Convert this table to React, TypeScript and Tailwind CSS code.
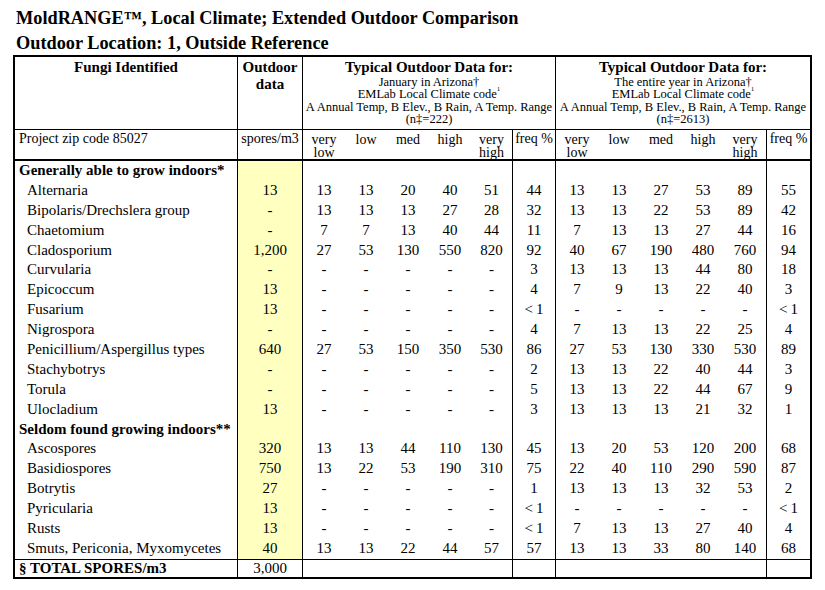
import React from "react";

type DataRow = { name: string; out: string; a: string[]; b: string[] };
type GroupRow = { group: string };
type R = DataRow | GroupRow;

const LT = "<\u20091";

const rows: R[] = [
  { group: "Generally able to grow indoors*" },
  { name: "Alternaria", out: "13", a: ["13", "13", "20", "40", "51", "44"], b: ["13", "13", "27", "53", "89", "55"] },
  { name: "Bipolaris/Drechslera group", out: "-", a: ["13", "13", "13", "27", "28", "32"], b: ["13", "13", "22", "53", "89", "42"] },
  { name: "Chaetomium", out: "-", a: ["7", "7", "13", "40", "44", "11"], b: ["7", "13", "13", "27", "44", "16"] },
  { name: "Cladosporium", out: "1,200", a: ["27", "53", "130", "550", "820", "92"], b: ["40", "67", "190", "480", "760", "94"] },
  { name: "Curvularia", out: "-", a: ["-", "-", "-", "-", "-", "3"], b: ["13", "13", "13", "44", "80", "18"] },
  { name: "Epicoccum", out: "13", a: ["-", "-", "-", "-", "-", "4"], b: ["7", "9", "13", "22", "40", "3"] },
  { name: "Fusarium", out: "13", a: ["-", "-", "-", "-", "-", LT], b: ["-", "-", "-", "-", "-", LT] },
  { name: "Nigrospora", out: "-", a: ["-", "-", "-", "-", "-", "4"], b: ["7", "13", "13", "22", "25", "4"] },
  { name: "Penicillium/Aspergillus types", out: "640", a: ["27", "53", "150", "350", "530", "86"], b: ["27", "53", "130", "330", "530", "89"] },
  { name: "Stachybotrys", out: "-", a: ["-", "-", "-", "-", "-", "2"], b: ["13", "13", "22", "40", "44", "3"] },
  { name: "Torula", out: "-", a: ["-", "-", "-", "-", "-", "5"], b: ["13", "13", "22", "44", "67", "9"] },
  { name: "Ulocladium", out: "13", a: ["-", "-", "-", "-", "-", "3"], b: ["13", "13", "13", "21", "32", "1"] },
  { group: "Seldom found growing indoors**" },
  { name: "Ascospores", out: "320", a: ["13", "13", "44", "110", "130", "45"], b: ["13", "20", "53", "120", "200", "68"] },
  { name: "Basidiospores", out: "750", a: ["13", "22", "53", "190", "310", "75"], b: ["22", "40", "110", "290", "590", "87"] },
  { name: "Botrytis", out: "27", a: ["-", "-", "-", "-", "-", "1"], b: ["13", "13", "13", "32", "53", "2"] },
  { name: "Pyricularia", out: "13", a: ["-", "-", "-", "-", "-", LT], b: ["-", "-", "-", "-", "-", LT] },
  { name: "Rusts", out: "13", a: ["-", "-", "-", "-", "-", LT], b: ["7", "13", "13", "27", "40", "4"] },
  { name: "Smuts, Periconia, Myxomycetes", out: "40", a: ["13", "13", "22", "44", "57", "57"], b: ["13", "13", "33", "80", "140", "68"] },
];

const COLS =
  "grid grid-cols-[223px_65px_42px_42px_42px_42px_42px_43px_42px_42px_42px_42px_43px_43px]";

function Sub({ v, last }: { v: string; last?: boolean }) {
  return <div className={last ? "text-center border-r border-black" : "text-center"}>{v}</div>;
}

function Group({ vals }: { vals: string[] }) {
  return (
    <>
      <Sub v={vals[0]} />
      <Sub v={vals[1]} />
      <Sub v={vals[2]} />
      <Sub v={vals[3]} />
      <Sub v={vals[4]} last />
    </>
  );
}

function SubHead({ top, bottom, last }: { top: string; bottom?: string; last?: boolean }) {
  return (
    <div className={last ? "text-center border-r border-black pt-[3px] leading-[13px]" : "text-center pt-[3px] leading-[13px]"}>
      <div>{top}</div>
      {bottom ? <div>{bottom}</div> : null}
    </div>
  );
}

function GroupHead({ line1, n }: { line1: string; n: string }) {
  return (
    <div className="text-center pt-[3px] whitespace-nowrap">
      <div className="font-bold text-[15px] leading-[15px]">Typical Outdoor Data for:</div>
      <div className="text-[12.5px] leading-[12.4px] pt-[1px]">
        <div>{line1}</div>
        <div>
          EMLab Local Climate code<sup className="text-[7px] align-[4px]">1</sup>
        </div>
        <div>A Annual Temp, B Elev., B Rain, A Temp. Range</div>
        <div>{n}</div>
      </div>
    </div>
  );
}

export default function App() {
  return (
    <div className="w-[825px] h-[590px] bg-white text-black font-['Liberation_Serif',serif]">
      <div className="pl-[16px] pt-[6px] text-[18.3px] leading-[24.5px] font-bold whitespace-nowrap">
        <div>MoldRANGE™, Local Climate; Extended Outdoor Comparison</div>
        <div>Outdoor Location: 1, Outside Reference</div>
      </div>
      <div className="ml-[13px] w-[799px] border-2 border-black">
        {/* header row */}
        <div className={`${COLS} h-[73px] border-b border-black`}>
          <div className="border-r border-black text-center font-bold text-[15px] leading-[17px] pt-[2px]">Fungi Identified</div>
          <div className="border-r border-black text-center font-bold text-[15px] leading-[17px] pt-[2px]">
            <div>Outdoor</div>
            <div>data</div>
          </div>
          <div className="col-span-6 border-r border-black">
            <GroupHead line1="January in Arizona†" n="(n‡=222)" />
          </div>
          <div className="col-span-6">
            <GroupHead line1="The entire year in Arizona†" n="(n‡=2613)" />
          </div>
        </div>
        {/* zip row */}
        <div className={`${COLS} h-[31px] border-b-2 border-black text-[14px]`}>
          <div className="border-r border-black pl-[4px] pt-[2px] leading-[13px] whitespace-nowrap">Project zip code 85027</div>
          <div className="border-r border-black text-center pt-[2px] leading-[13px]">spores/m3</div>
          <SubHead top="very" bottom="low" />
          <SubHead top="low" />
          <SubHead top="med" />
          <SubHead top="high" />
          <SubHead top="very" bottom="high" last />
          <div className="border-r border-black text-center pt-[2px] leading-[13px] whitespace-nowrap">freq %</div>
          <SubHead top="very" bottom="low" />
          <SubHead top="low" />
          <SubHead top="med" />
          <SubHead top="high" />
          <SubHead top="very" bottom="high" last />
          <div className="text-center pt-[2px] leading-[13px] whitespace-nowrap">freq %</div>
        </div>
        {/* data rows */}
        {rows.map((r, i) =>
          "group" in r ? (
            <div key={i} className={`${COLS} h-[19.9px] text-[15px] leading-[19.9px]`}>
              <div className="border-r border-black pl-[4px] font-bold whitespace-nowrap">{r.group}</div>
              <div className="border-r border-black bg-[#ffffc0]"></div>
              <div className="col-span-5 border-r border-black"></div>
              <div className="border-r border-black"></div>
              <div className="col-span-5 border-r border-black"></div>
              <div></div>
            </div>
          ) : (
            <div key={i} className={`${COLS} h-[19.9px] text-[15px] leading-[19.9px]`}>
              <div className="border-r border-black pl-[12px] whitespace-nowrap">{r.name}</div>
              <div className="border-r border-black bg-[#ffffc0] text-center">{r.out}</div>
              <Group vals={r.a} />
              <div className="border-r border-black text-center whitespace-nowrap">{r.a[5]}</div>
              <Group vals={r.b} />
              <div className="text-center whitespace-nowrap">{r.b[5]}</div>
            </div>
          )
        )}
        {/* total row */}
        <div className={`${COLS} h-[18px] border-t border-black text-[15px] leading-[17px]`}>
          <div className="border-r border-black pl-[4px] font-bold whitespace-nowrap">§ TOTAL SPORES/m3</div>
          <div className="border-r border-black text-center">3,000</div>
          <div className="col-span-5 border-r border-black"></div>
          <div className="border-r border-black"></div>
          <div className="col-span-5 border-r border-black"></div>
          <div></div>
        </div>
      </div>
    </div>
  );
}
